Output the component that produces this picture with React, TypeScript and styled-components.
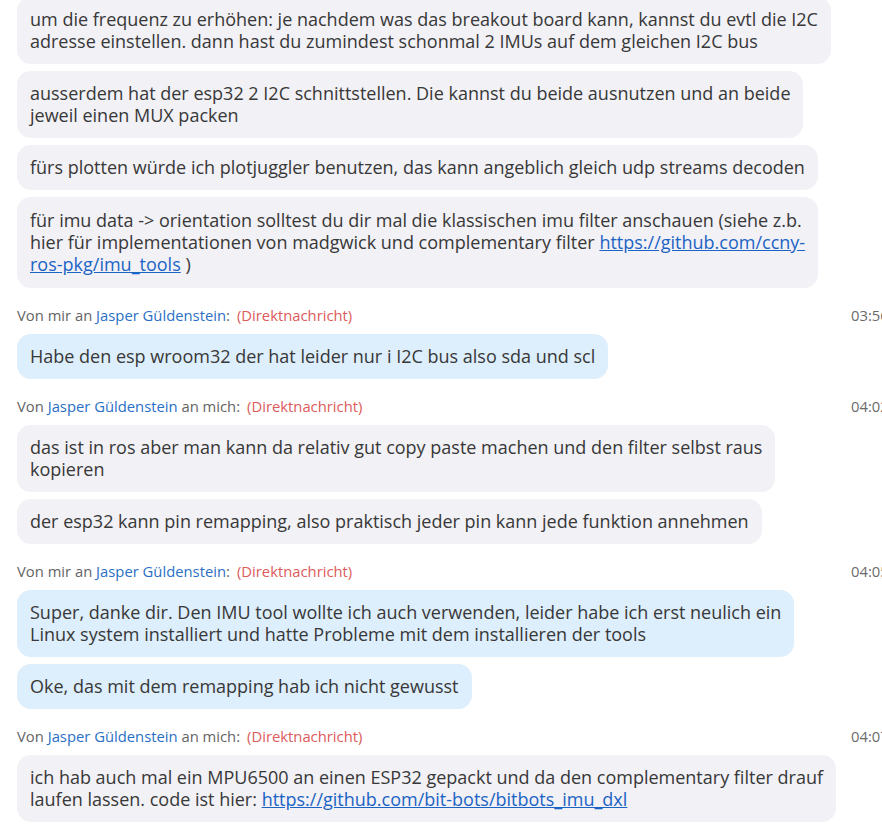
import React from 'react';
import styled, { createGlobalStyle } from 'styled-components';

const GlobalStyle = createGlobalStyle`
  html, body {
    margin: 0;
    padding: 0;
    background: #ffffff;
    overflow: hidden;
  }
  body {
    font-family: "Open Sans", "Noto Sans", sans-serif;
  }
`;

const Page = styled.div`
  display: flex;
  flex-direction: column;
  align-items: flex-start;
  gap: 7px;
  padding-left: 17px;
  margin-top: -3px;
  width: 880px;
`;

const Bubble = styled.div<{ $mine?: boolean; $tall?: boolean }>`
  background: ${(p) => (p.$mine ? '#ddeefc' : '#f1f1f6')};
  color: #383838;
  border-radius: 14px;
  padding: ${(p) => (p.$tall ? '12px 13px 13px' : '11px 13px 12px')};
  font-size: 18px;
  line-height: 22px;
  white-space: nowrap;
`;

const Link = styled.a`
  color: #1c64c4;
  text-decoration: underline;
`;

const Header = styled.div`
  display: flex;
  align-items: center;
  width: 100%;
  margin-top: 10px;
  margin-bottom: 2px;
  font-size: 14.8px;
  line-height: 20px;
  color: #656565;
  white-space: nowrap;
`;

const Name = styled.span`
  color: #2a6fc6;
`;

const Direct = styled.span`
  color: #dc5b5b;
  margin-left: 7px;
`;

const Time = styled.span`
  margin-left: auto;
  width: 46px;
  color: #6a6a6a;
`;

type HeaderProps = { mine: boolean; time: string };

function MessageHeader({ mine, time }: HeaderProps) {
  return (
    <Header>
      {mine ? (
        <span>
          Von mir an <Name>Jasper Güldenstein</Name>:
        </span>
      ) : (
        <span>
          Von <Name>Jasper Güldenstein</Name> an mich:
        </span>
      )}
      <Direct>(Direktnachricht)</Direct>
      <Time>{time}</Time>
    </Header>
  );
}

export default function App() {
  return (
    <>
      <GlobalStyle />
      <Page>
        <Bubble>
          um die frequenz zu erhöhen: je nachdem was das breakout board kann, kannst du evtl die I2C
          <br />
          adresse einstellen. dann hast du zumindest schonmal 2 IMUs auf dem gleichen I2C bus
        </Bubble>
        <Bubble>
          ausserdem hat der esp32 2 I2C schnittstellen. Die kannst du beide ausnutzen und an beide
          <br />
          jeweil einen MUX packen
        </Bubble>
        <Bubble>
          fürs plotten würde ich plotjuggler benutzen, das kann angeblich gleich udp streams decoden
        </Bubble>
        <Bubble $tall>
          für imu data -&gt; orientation solltest du dir mal die klassischen imu filter anschauen (siehe z.b.
          <br />
          hier für implementationen von madgwick und complementary filter{' '}
          <Link href="#">
            https://github.com/ccny-
            <br />
            ros-pkg/imu_tools
          </Link>{' '}
          )
        </Bubble>

        <MessageHeader mine time="03:56" />
        <Bubble $mine>Habe den esp wroom32 der hat leider nur i I2C bus also sda und scl</Bubble>

        <MessageHeader mine={false} time="04:02" />
        <Bubble>
          das ist in ros aber man kann da relativ gut copy paste machen und den filter selbst raus
          <br />
          kopieren
        </Bubble>
        <Bubble>der esp32 kann pin remapping, also praktisch jeder pin kann jede funktion annehmen</Bubble>

        <MessageHeader mine time="04:05" />
        <Bubble $mine>
          Super, danke dir. Den IMU tool wollte ich auch verwenden, leider habe ich erst neulich ein
          <br />
          Linux system installiert und hatte Probleme mit dem installieren der tools
        </Bubble>
        <Bubble $mine>Oke, das mit dem remapping hab ich nicht gewusst</Bubble>

        <MessageHeader mine={false} time="04:07" />
        <Bubble>
          ich hab auch mal ein MPU6500 an einen ESP32 gepackt und da den complementary filter drauf
          <br />
          laufen lassen. code ist hier: <Link href="#">https://github.com/bit-bots/bitbots_imu_dxl</Link>
        </Bubble>
      </Page>
    </>
  );
}
